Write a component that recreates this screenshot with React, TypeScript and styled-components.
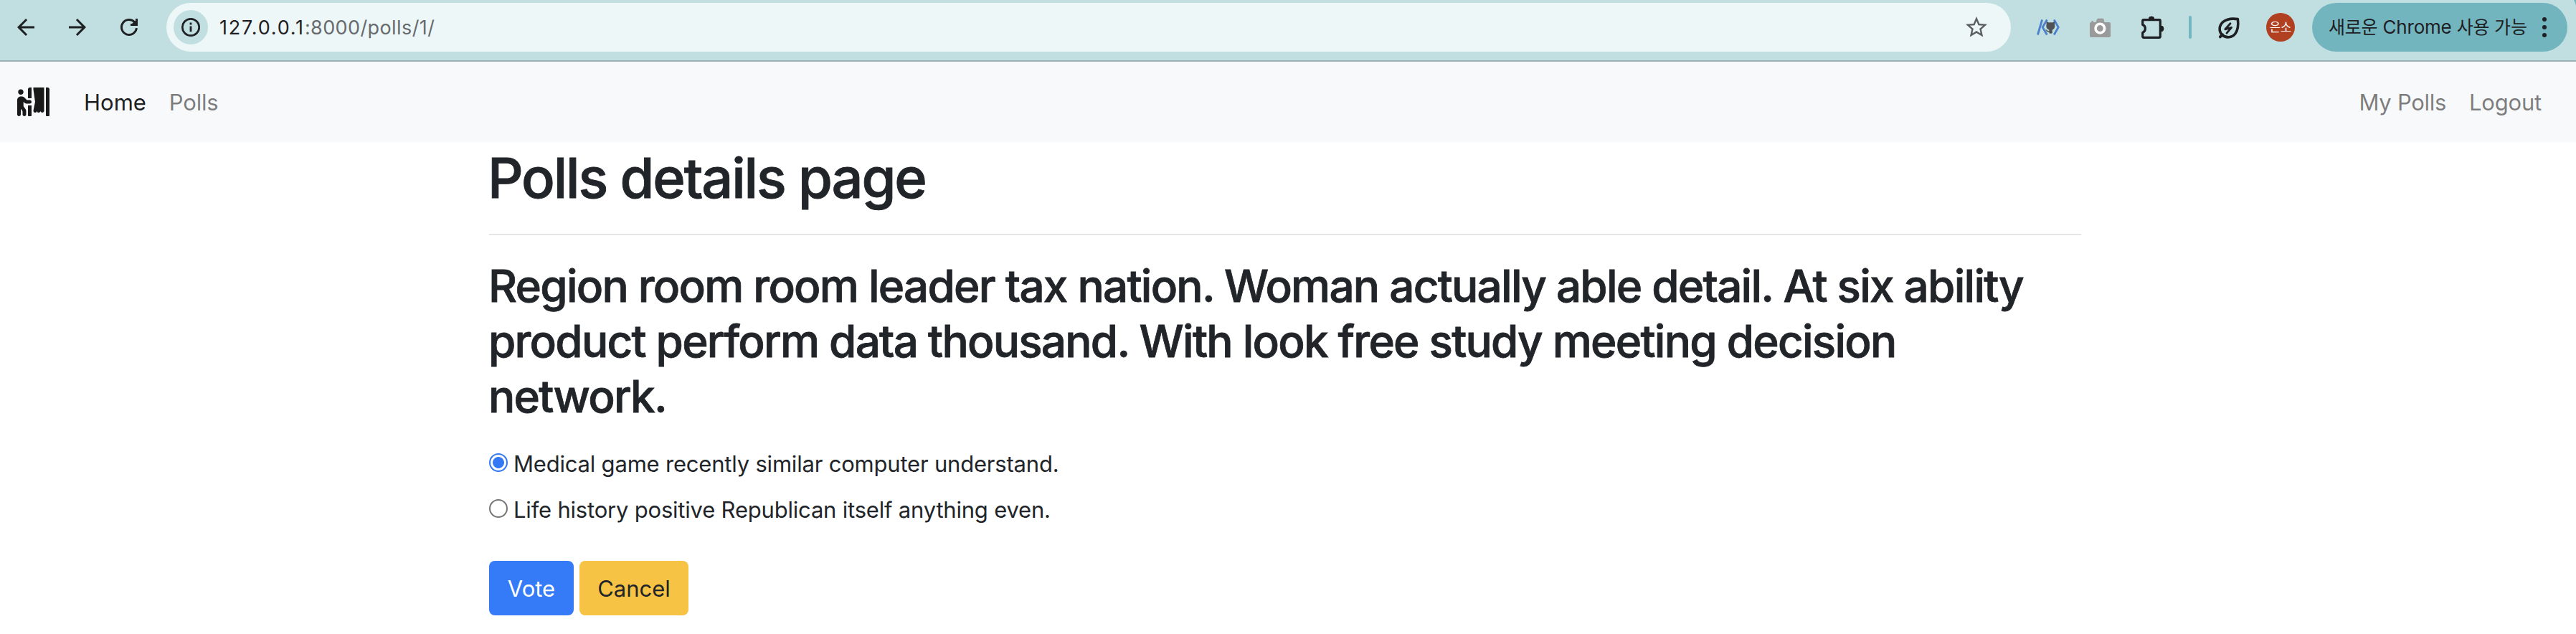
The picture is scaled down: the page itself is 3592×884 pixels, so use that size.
import React, { useState } from 'react';
import styled, { createGlobalStyle } from 'styled-components';
import { FaPersonBooth } from 'react-icons/fa';
import { MdArrowBack, MdArrowForward, MdStarBorder } from 'react-icons/md';

const GlobalStyle = createGlobalStyle`
  *, *::before, *::after { box-sizing: border-box; }
  body {
    margin: 0;
    background: #fff;
    color: #212529;
    font-family: Inter, "Noto Sans CJK KR", sans-serif;
    font-size: 31px;
    line-height: 48px;
    overflow: hidden;
  }
  svg { display: block; flex: none; }
`;

const Toolbar = styled.header`
  position: relative;
  display: flex;
  align-items: center;
  height: 86px;
  padding: 4px 12px 12px 18px;
  background: #c1dfe1;
  border-bottom: 2px solid #9bb3b7;
  color: #1f2023;
`;

const NavControls = styled.div`
  display: flex;
  gap: 36px;
  margin-right: 34px;
`;

const AddressBar = styled.div`
  display: flex;
  flex: 1;
  align-items: center;
  height: 68px;
  padding: 0 30px 0 10px;
  border-radius: 34px;
  background: #eef7f8;
`;

const SiteInfo = styled.div`
  display: flex;
  align-items: center;
  justify-content: center;
  width: 48px;
  height: 48px;
  margin-right: 16px;
  border-radius: 50%;
  background: #c1dfe1;
`;

const Url = styled.div`
  flex: 1;
  padding-top: 2px;
  font-size: 27px;
  line-height: 34px;
  white-space: nowrap;
`;

const Host = styled.span`
  letter-spacing: 1.8px;
`;

const UrlPath = styled.span`
  color: #676b6e;
  letter-spacing: 0.4px;
`;

const StarButton = styled.div`
  color: #5c5f62;
`;

const Extensions = styled.div`
  display: flex;
  align-items: center;
  gap: 40px;
  margin: 0 32px 0 36px;
`;

const Divider = styled.div`
  width: 4px;
  height: 32px;
  margin-right: 34px;
  border-radius: 2px;
  background: #72b6c0;
`;

const Avatar = styled.div`
  display: flex;
  align-items: center;
  justify-content: center;
  width: 40px;
  height: 40px;
  margin: 0 24px 0 34px;
  border-radius: 50%;
  background: #b04020;
  color: #fff;
  font-size: 16.5px;
  line-height: 24px;
`;

const UpdatePill = styled.div`
  display: flex;
  align-items: center;
  justify-content: space-between;
  width: 356px;
  height: 68px;
  padding: 0 29px 0 23px;
  border-radius: 34px;
  background: #72b5bf;
  font-size: 26px;
  line-height: 40px;
  letter-spacing: -0.2px;
  white-space: nowrap;
`;

const Hangul = styled.span`
  font-size: 25px;
`;

const FrameCorner = styled.svg`
  position: absolute;
  top: 0;
  right: 0;
`;

const Navbar = styled.nav`
  display: flex;
  height: 112px;
  padding: 33px 32px 0 24px;
  background: #f8f9fb;
`;

const Brand = styled.a`
  margin: 3px 32px 0 0;
  color: rgba(0, 0, 0, 0.9);

  svg {
    width: 45px;
    height: 40px;
  }
`;

const NavGroup = styled.div<{ $end?: boolean }>`
  display: flex;
  margin-left: ${(p) => (p.$end ? 'auto' : '0')};
`;

const NavLink = styled.a<{ $active?: boolean; $tracking?: number }>`
  padding: 0 16px;
  color: ${(p) => (p.$active ? 'rgba(0, 0, 0, 0.9)' : 'rgba(0, 0, 0, 0.5)')};
  letter-spacing: ${(p) => p.$tracking ?? 0}px;
  white-space: nowrap;
`;

const Container = styled.main`
  width: 2220px;
  margin-left: 682px;
`;

const Title = styled.h1`
  margin: 0;
  padding: 2px 0 30px;
  border-bottom: 2px solid #e5e5e5;
  font-size: 77.5px;
  font-weight: 500;
  line-height: 96px;
  letter-spacing: -2.15px;
  text-indent: -2px;
  -webkit-text-stroke: 0.9px currentColor;
`;

const Question = styled.h2`
  margin: 0 0 31.6px -1px;
  padding-top: 33px;
  font-size: 62px;
  font-weight: 500;
  line-height: 76.8px;
  letter-spacing: -1.75px;
  -webkit-text-stroke: 0.8px currentColor;
  white-space: nowrap;
`;

const Choices = styled.div`
  display: flex;
  flex-direction: column;
  gap: 16px;
`;

const Choice = styled.label`
  display: flex;
  height: 48px;
  letter-spacing: -0.2px;
  white-space: nowrap;
`;

const Radio = styled.input`
  appearance: none;
  width: 26px;
  height: 26px;
  margin: 9px 8px 0 0;
  border: 2px solid #767676;
  border-radius: 50%;
  background: #fff;

  &:checked {
    border-color: #3478f6;
    background: radial-gradient(circle, #3478f6 7.5px, #fff 8.3px);
  }
`;

const Actions = styled.div`
  display: flex;
  gap: 8px;
  margin-top: 47px;
`;

const Button = styled.button<{ $kind: 'primary' | 'warning' }>`
  width: ${(p) => (p.$kind === 'primary' ? 118 : 152)}px;
  height: 76px;
  padding: 15px 0 13px;
  border: 0;
  border-radius: 8px;
  background: ${(p) => (p.$kind === 'primary' ? '#357af6' : '#f6c344')};
  color: ${(p) => (p.$kind === 'primary' ? '#fff' : '#212529')};
  font: inherit;
`;

const ReloadIcon = () => (
  <svg width="36" height="36" viewBox="0 0 36 36" fill="none" stroke="currentColor" strokeWidth="3">
    <path d="M28.4 19.2A10.5 10.5 0 1 1 25.8 11" />
    <path d="M28.5 6V14.5H20" />
    <path d="M22 13L28 8V14Z" fill="currentColor" stroke="none" />
  </svg>
);

const InfoIcon = () => (
  <svg width="28" height="28" viewBox="0 0 28 28" fill="none" stroke="currentColor">
    <circle cx="14" cy="14" r="11.7" strokeWidth="2.7" />
    <path d="M14 12.5V20.3M14 7.6V10.4" strokeWidth="2.8" />
  </svg>
);

const RepoTreeIcon = () => (
  <svg width="32" height="32" viewBox="0 0 32 32" fill="none">
    <path d="M1.4 26.5L7.6 5.5M14.4 5.5L8.2 16L14.4 26.5M24.2 5.5L30.2 16L24.2 26.5" stroke="#4a80cc" strokeWidth="2.8" />
    <path
      d="M13.6 9.2C13.4 8.6 13.8 8 14.4 8.3L17 9.6C18.6 9.2 20.4 9.2 21.8 9.6L24.2 8.3C24.8 8 25.2 8.6 25 9.2V12C26 15.8 24.6 18.8 21.8 19.5V24C21.8 25 17.4 25 17.4 24V22.4C15.4 22.8 14.2 22.2 13.4 21C13 20.4 12.5 20.1 12 19.8C13.4 19.2 14.4 20 15 20.7C15.6 21.2 16.6 21.2 17.4 20.8V19.5C14 18.8 12.8 15.8 13.6 12Z"
      fill="#505355"
    />
  </svg>
);

const CameraIcon = () => (
  <svg width="32" height="32" viewBox="0 0 32 32">
    <path
      d="M4 9Q4 7 5.5 7T7.5 9H10.5L12 5Q12.5 3.8 14 3.8H20Q21.4 3.8 21.6 5L22.3 9H29Q31 9 31 11V28Q31 30 29 30H4Q2 30 2 28V11Q2 9 4 9Z"
      fill="#999b9b"
    />
    <circle cx="16.3" cy="17.6" r="6.3" fill="#999b9b" stroke="#fff" strokeWidth="3.6" />
  </svg>
);

const PuzzleIcon = () => (
  <svg width="36" height="36" viewBox="0 0 36 36" fill="none">
    <path
      d="M3.7 14.6V9.2Q3.7 7.7 5.2 7.7H26.8Q28.3 7.7 28.3 9.2V30.8Q28.3 32.3 26.8 32.3H5.2Q3.7 32.3 3.7 30.8V25.4C8.6 23.6 8.6 16.4 3.7 14.6Z"
      stroke="currentColor"
      strokeWidth="3.2"
      strokeLinejoin="round"
    />
    <path d="M12 7A4 4 0 0 1 20 7ZM29 16A4 4 0 0 1 29 24Z" fill="currentColor" stroke="currentColor" strokeWidth="1" />
  </svg>
);

const EnergyLeafIcon = () => (
  <svg width="36" height="36" viewBox="0 0 36 36" fill="none" stroke="currentColor" strokeLinecap="round" strokeLinejoin="round">
    <path
      d="M30.4 6.6C24 5.6 15.4 6.2 10 10.4C3.8 15.6 3.8 24 8.6 28.6C13.6 33.4 22.6 33 27 26.8C31 21 31.2 13 30.4 6.6Z"
      strokeWidth="3.6"
    />
    <path d="M9 28.2L5.8 31.4" strokeWidth="3.8" />
    <path d="M20 12.8L12.8 20.8L21.6 18.4L15 26.2" strokeWidth="2.8" />
  </svg>
);

const MenuDots = () => (
  <svg width="6" height="30" viewBox="0 0 6 30" fill="currentColor">
    <circle cx="3" cy="4" r="3" />
    <circle cx="3" cy="15" r="3" />
    <circle cx="3" cy="26" r="3" />
  </svg>
);

const choices = [
  'Medical game recently similar computer understand.',
  'Life history positive Republican itself anything even.',
];

export default function App() {
  const [selected, setSelected] = useState(0);

  return (
    <>
      <GlobalStyle />
      <Toolbar>
        <NavControls>
          <MdArrowBack size={36} />
          <MdArrowForward size={36} />
          <ReloadIcon />
        </NavControls>
        <AddressBar>
          <SiteInfo>
            <InfoIcon />
          </SiteInfo>
          <Url>
            <Host>127.0.0.1</Host>
            <UrlPath>:8000/polls/1/</UrlPath>
          </Url>
          <StarButton>
            <MdStarBorder size={36} />
          </StarButton>
        </AddressBar>
        <Extensions>
          <RepoTreeIcon />
          <CameraIcon />
          <PuzzleIcon />
        </Extensions>
        <Divider />
        <EnergyLeafIcon />
        <Avatar>은소</Avatar>
        <UpdatePill>
          <span>
            <Hangul>새로운</Hangul> Chrome <Hangul>사용 가능</Hangul>
          </span>
          <MenuDots />
        </UpdatePill>
        <FrameCorner width="4" height="8" viewBox="0 0 4 8">
          <path d="M1 0H4V8Q3 3 1 0Z" fill="#72b5bf" />
        </FrameCorner>
      </Toolbar>

      <Navbar>
        <Brand>
          <FaPersonBooth />
        </Brand>
        <NavGroup>
          <NavLink $active>Home</NavLink>
          <NavLink $tracking={-0.2}>Polls</NavLink>
        </NavGroup>
        <NavGroup $end>
          <NavLink $tracking={-0.3}>My Polls</NavLink>
          <NavLink $tracking={-0.2}>Logout</NavLink>
        </NavGroup>
      </Navbar>

      <Container>
        <Title>Polls details page</Title>
        <Question>
          Region room room leader tax nation. Woman actually able detail. At six ability
          <br />
          product perform data thousand. With look free study meeting decision
          <br />
          network.
        </Question>
        <Choices>
          {choices.map((text, i) => (
            <Choice key={text}>
              <Radio type="radio" name="choice" checked={selected === i} onChange={() => setSelected(i)} />
              {text}
            </Choice>
          ))}
        </Choices>
        <Actions>
          <Button $kind="primary">Vote</Button>
          <Button $kind="warning">Cancel</Button>
        </Actions>
      </Container>
    </>
  );
}
